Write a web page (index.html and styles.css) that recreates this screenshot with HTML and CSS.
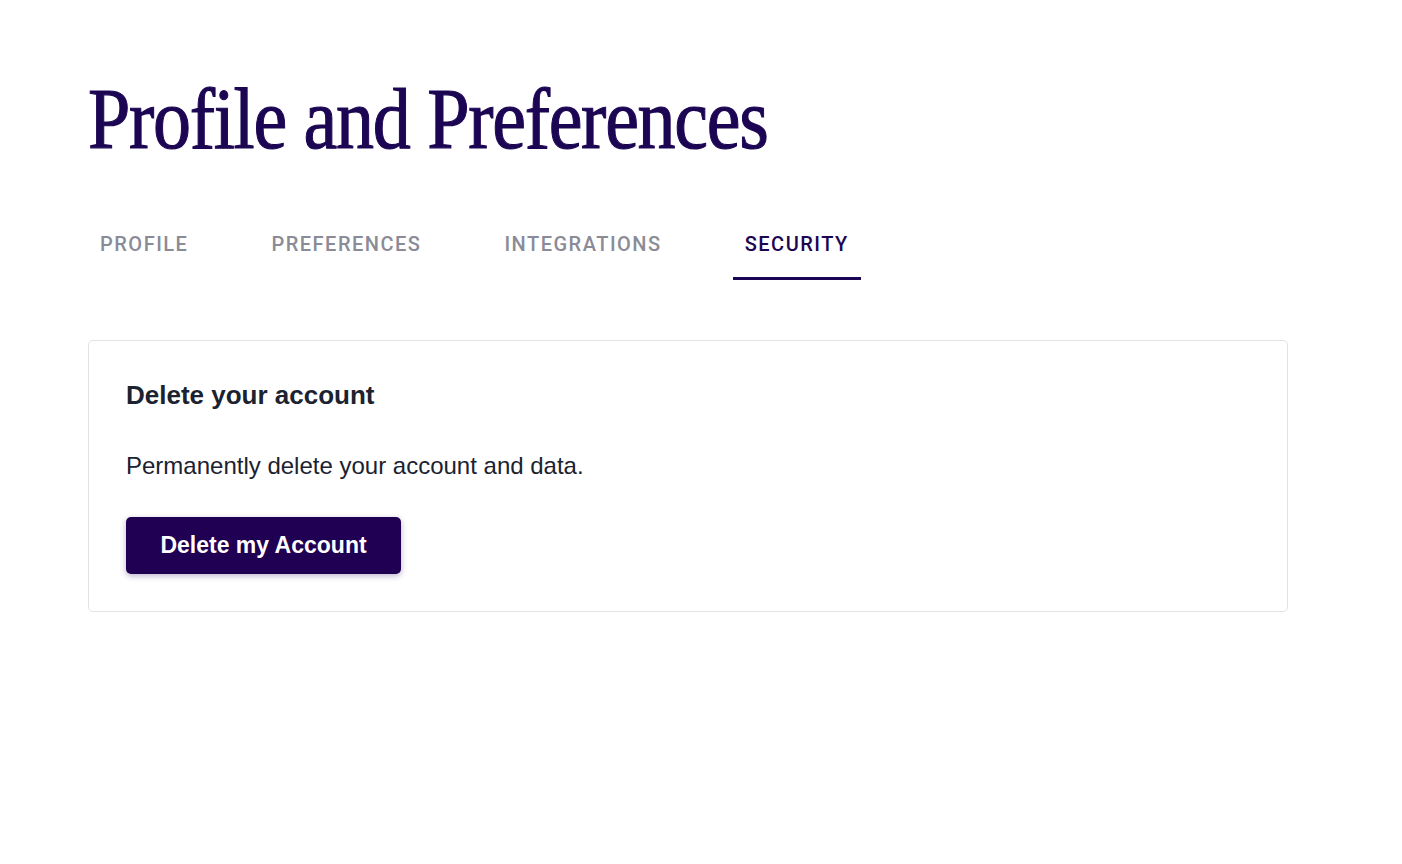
FILE: index.html
```html
<!DOCTYPE html>
<html lang="en">
<head>
    <meta charset="UTF-8">
    <meta name="viewport" content="width=device-width, initial-scale=1.0">
    <title>Profile and Preferences</title>

    <link rel="stylesheet" href="styles.css">
</head>
<body>
    <div class="container">
        <h1><span>Profile and Preferences</span></h1>

        <nav class="tabs">
            <a href="#profile" class="tab">Profile</a>
            <a href="#preferences" class="tab">Preferences</a>
            <a href="#integrations" class="tab">Integrations</a>
            <a href="#security" class="tab active">Security</a>
        </nav>

        <div class="card">
            <h3>Delete your account</h3>
            <p>Permanently delete your account and data.</p>
            <button onclick="alert('This feature is under construction')">Delete my Account</button>
        </div>
    </div>
</body>
</html>
```

FILE: styles.css
```css
body { margin: 0; font-family: "Liberation Sans", Arial, sans-serif; color: #1b2230; background: #fff; }
.container { width: 1200px; padding: 75px 0 0 88px; }
h1 { margin: 0; font-family: "Liberation Serif", "Times New Roman", serif; font-size: 86px; font-weight: normal; line-height: 88px; color: #1c0653; letter-spacing: -1.5px; white-space: nowrap; }
h1 span { display: inline-block; transform: scaleX(0.885); transform-origin: left center; -webkit-text-stroke: 1.1px #1c0653; }
.tabs { display: flex; gap: 59px; margin-top: 69px; }
.tab { padding: 0 12px 21px; font-family: Roboto, "Liberation Sans", sans-serif; font-size: 20px; font-weight: 500; letter-spacing: 1.5px; text-transform: uppercase; text-decoration: none; color: #8a8b96; border-bottom: 3px solid transparent; line-height: 24px; }
.tab.active { color: #1c0653; border-bottom-color: #1c0653; }
.card { margin-top: 60px; border: 1px solid #e2e2e2; border-radius: 5px; padding: 38px 37px 37px; }
h3 { margin: 0; font-size: 26px; line-height: 32px; color: #1b2230; }
p { margin: 39px 0 0; font-size: 24px; line-height: 32px; }
button { margin-top: 35px; width: 275px; height: 57px; font-family: inherit; font-size: 23px; font-weight: bold; color: #fff; background: #1f0053; border: none; border-radius: 5px; box-shadow: 0 2px 6px rgba(31, 0, 83, 0.3); cursor: pointer; }
```
